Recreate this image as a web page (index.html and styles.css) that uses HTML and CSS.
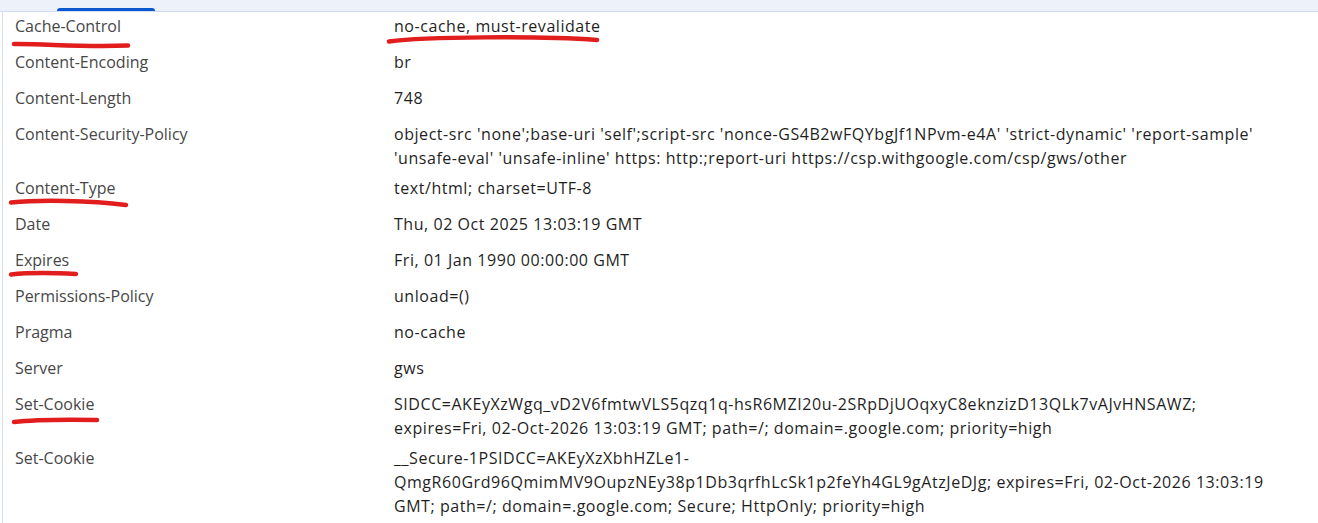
FILE: index.html
```html
<!DOCTYPE html>
<html>
<head><meta charset="utf-8"><title>Response Headers</title><link rel="stylesheet" href="styles.css"></head>
<body>
<div class="panel">
  <div class="tabbar">
    <span class="tab tab-active">Headers</span>
    <span class="tab tab-payload">Payload</span>
    <span class="tab tab-preview">Preview</span>
    <span class="tab tab-response">Response</span>
    <span class="tab tab-initiator">Initiator</span>
    <span class="tab tab-timing">Timing</span>
    <span class="tab tab-cookies">Cookies</span>
  </div>
  <div class="headers">
    <div class="row"><div class="name">Cache-Control</div><div class="value">no-cache, must-revalidate</div></div>
    <div class="row"><div class="name">Content-Encoding</div><div class="value">br</div></div>
    <div class="row"><div class="name">Content-Length</div><div class="value">748</div></div>
    <div class="row"><div class="name">Content-Security-Policy</div><div class="value">object-src 'none';base-uri 'self';script-src 'nonce-GS4B2wFQYbgJf1NPvm-e4A' 'strict-dynamic' 'report-sample' 'unsafe-eval' 'unsafe-inline' https: http:;report-uri https://csp.withgoogle.com/csp/gws/other</div></div>
    <div class="row"><div class="name">Content-Type</div><div class="value">text/html; charset=UTF-8</div></div>
    <div class="row"><div class="name">Date</div><div class="value">Thu, 02 Oct 2025 13:03:19 GMT</div></div>
    <div class="row"><div class="name">Expires</div><div class="value">Fri, 01 Jan 1990 00:00:00 GMT</div></div>
    <div class="row"><div class="name">Permissions-Policy</div><div class="value">unload=()</div></div>
    <div class="row"><div class="name">Pragma</div><div class="value">no-cache</div></div>
    <div class="row"><div class="name">Server</div><div class="value">gws</div></div>
    <div class="row"><div class="name">Set-Cookie</div><div class="value">SIDCC=AKEyXzWgq_vD2V6fmtwVLS5qzq1q-hsR6MZI20u-2SRpDjUOqxyC8eknzizD13QLk7vAJvHNSAWZ; expires=Fri, 02-Oct-2026 13:03:19 GMT; path=/; domain=.google.com; priority=high</div></div>
    <div class="row"><div class="name">Set-Cookie</div><div class="value">__Secure-1PSIDCC=AKEyXzXbhHZLe1-QmgR60Grd96QmimMV9OupzNEy38p1Db3qrfhLcSk1p2feYh4GL9gAtzJeDJg; expires=Fri, 02-Oct-2026 13:03:19 GMT; path=/; domain=.google.com; Secure; HttpOnly; priority=high</div></div>
  </div>
  <svg class="marks" width="1318" height="523" viewBox="0 0 1318 523" aria-hidden="true">
    <g fill="none" stroke="#e11d1d" stroke-width="4.5" stroke-linecap="round">
      <path d="M14 44 C 45 43.5 80 47.5 128 45.5"/>
      <path d="M389 41.5 C 425 36.5 540 36 597 40"/>
      <path d="M11 202.5 C 40 199.5 90 200.5 126 205"/>
      <path d="M11 274.5 C 30 272.5 55 273 76 274"/>
      <path d="M14 422 C 40 419 70 419.5 97 420"/>
    </g>
  </svg>
</div>
</body>
</html>
```
FILE: styles.css
```css
html, body {
  margin: 0;
  background: #ffffff;
}

.panel {
  position: relative;
  width: 1318px;
  height: 523px;
  overflow: hidden;
  font-family: "Open Sans", "Noto Sans", sans-serif;
}

.tabbar {
  height: 11px;
  display: flex;
  align-items: flex-start;
  background: #edf1fa;
  border-bottom: 1px solid #cfdcf1;
  overflow: hidden;
  font-size: 13px;
  line-height: 16px;
  color: #474747;
  padding-left: 57px;
}

.tab {
  margin-top: -18px;
  height: 29px;
  position: relative;
  flex: none;
}

.tab-active {
  width: 98px;
  text-align: center;
  color: #0b57d0;
}

.tab-active::after {
  content: "";
  position: absolute;
  left: 0;
  right: 0;
  bottom: 0;
  height: 3px;
  border-radius: 3px 3px 0 0;
  background: #0b57d0;
}

.tab-payload { margin-left: 11px; }
.tab-preview { margin-left: 40px; }
.tab-response { margin-left: 47px; }
.tab-initiator { margin-left: 52px; }
.tab-timing { margin-left: 64px; }
.tab-cookies { margin-left: 52px; }

.headers {
  margin-left: 2px;
  border-left: 1px solid #d5e0f3;
  padding: 2px 46px 0 12px;
  height: 520px;
}

.row {
  display: flex;
  align-items: flex-start;
  font-size: 16px;
  line-height: 24px;
}

.name {
  flex: none;
  width: 379px;
  padding-bottom: 12px;
  color: #474747;
}

.value {
  flex: 1;
  min-width: 0;
  padding-bottom: 6px;
  color: #1f1f1f;
  letter-spacing: 0.55px;
  overflow-wrap: anywhere;
}

.marks {
  position: absolute;
  top: 0;
  left: 0;
  pointer-events: none;
}
```
